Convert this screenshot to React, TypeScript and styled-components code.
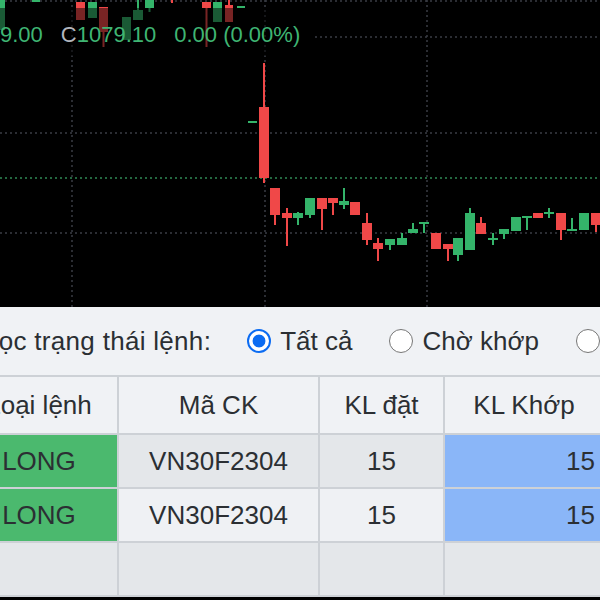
import React from "react";
import styled, { createGlobalStyle } from "styled-components";

const GlobalStyle = createGlobalStyle`
  html, body {
    margin: 0;
    padding: 0;
    background: #000;
  }
  body {
    font-family: "Liberation Sans", Arial, sans-serif;
  }
`;

const UP = "#34b46a";
const DOWN = "#f04848";

type Candle = { x: number; w?: number; t: number; b: number; h?: number; l?: number; up: boolean };

// main series, read off the chart
const candles: Candle[] = [
  { x: 259, t: 107, b: 178, h: 63, l: 183, up: false },
  { x: 270, t: 188, b: 215, l: 225, up: false },
  { x: 282, t: 213, b: 218, h: 208, l: 246, up: false },
  { x: 293, t: 213, b: 218, h: 212, l: 225, up: true },
  { x: 305, t: 198, b: 215, l: 218, up: true },
  { x: 317, t: 198, b: 209, l: 230, up: false },
  { x: 328, t: 198, b: 203, l: 215, up: false },
  { x: 339, t: 201, b: 205, h: 188, l: 209, up: true },
  { x: 350, t: 202, b: 215, up: false },
  { x: 362, t: 223, b: 240, h: 213, l: 245, up: false },
  { x: 373, t: 243, b: 249, h: 238, l: 261, up: false },
  { x: 385, t: 239, b: 245, l: 250, up: true },
  { x: 397, t: 238, b: 245, h: 233, up: true },
  { x: 408, t: 229, b: 233, h: 223, up: true },
  { x: 419, t: 222, b: 224, l: 233, up: true },
  { x: 431, t: 233, b: 249, up: false },
  { x: 443, t: 244, b: 249, l: 261, up: false },
  { x: 453, t: 238, b: 255, l: 261, up: true },
  { x: 465, t: 213, b: 250, h: 208, up: true },
  { x: 476, t: 223, b: 234, h: 217, up: false },
  { x: 488, t: 238, b: 240, h: 233, l: 245, up: true },
  { x: 499, t: 229, b: 234, l: 239, up: true },
  { x: 511, t: 217, b: 231, up: true },
  { x: 522, t: 216, b: 218, l: 230, up: true },
  { x: 533, t: 213, b: 218, up: false },
  { x: 544, t: 212, b: 214, h: 208, l: 218, up: true },
  { x: 556, t: 213, b: 230, l: 240, up: false },
  { x: 567, t: 229, b: 231, h: 218, up: true },
  { x: 579, t: 213, b: 230, up: true },
  { x: 591, t: 213, b: 225, l: 232, up: false },
  // top strip, partly under the legend
  { x: 0, w: 5, t: 0, b: 30, up: true },
  { x: 32, w: 8, t: 0, b: 2, up: true },
  { x: 76, w: 9, t: 2, b: 20, up: false },
  { x: 88, w: 9, t: 2, b: 18, up: true },
  { x: 99, w: 9, t: 7, b: 32, l: 47, up: false },
  { x: 122, w: 9, t: 17, b: 40, up: true },
  { x: 133, w: 10, t: 10, b: 20, h: 0, up: true },
  { x: 145, w: 9, t: 0, b: 8, l: 12, up: true },
  { x: 171, w: 2, t: 0, b: 3, up: false },
  { x: 202, w: 9, t: 2, b: 8, l: 47, up: false },
  { x: 213, w: 9, t: 2, b: 22, up: true },
  { x: 225, w: 8, t: 5, b: 22, h: 0, up: false },
  { x: 237, w: 8, t: 6, b: 8, up: true },
];

const ChartPane = styled.div`
  position: relative;
  height: 307px;
  background: #000;
  overflow: hidden;
`;

const Legend = styled.div`
  position: absolute;
  top: 8px;
  left: 0;
  width: 312px;
  height: 48px;
  box-sizing: border-box;
  padding-top: 6px;
  display: flex;
  align-items: center;
  gap: 18px;
  background: rgba(0, 0, 0, 0.5);
  font-size: 22px;
  color: #3fb573;
  white-space: nowrap;
`;

const Muted = styled.span`
  color: #b2b5be;
`;

const OrderPanel = styled.div`
  margin-left: -39px;
  width: 660px;
  background: #f0f2f5;
  color: #2b2f33;
  font-size: 26px;
`;

const FilterBar = styled.div`
  height: 68px;
  box-sizing: border-box;
  padding-left: 23px;
  display: flex;
  align-items: center;
  white-space: nowrap;
`;

const FilterLabel = styled.span`
  margin-right: 36px;
  letter-spacing: 0.3px;
`;

const RadioOption = styled.label`
  display: flex;
  align-items: center;
  gap: 9px;
  margin-right: 37px;
`;

const RadioDot = styled.span<{ $checked?: boolean }>`
  width: 24px;
  height: 24px;
  box-sizing: border-box;
  border-radius: 50%;
  border: ${(p) => (p.$checked ? "2.5px solid #0c6cf2" : "1.5px solid #767676")};
  background: ${(p) =>
    p.$checked ? "radial-gradient(circle, #0c6cf2 0 6px, #fff 6.8px)" : "#fff"};
`;

const OrdersGrid = styled.div`
  display: grid;
  grid-template-columns: 158px 201px 125px 160px;
  border-top: 2px solid #cdd1d6;
`;

type Tone = "head" | "dark" | "light" | "long" | "match";

const tones: Record<Tone, string> = {
  head: "#f0f2f5",
  dark: "#e4e7ea",
  light: "#eff1f4",
  long: "#4bb96e",
  match: "#8ab6f8",
};

const Cell = styled.div<{ $tone: Tone; $align?: "center" | "right"; $head?: boolean }>`
  height: ${(p) => (p.$head ? "58px" : "54px")};
  box-sizing: border-box;
  border-right: 2px solid #cdd1d6;
  border-bottom: 2px solid #cdd1d6;
  background: ${(p) => tones[p.$tone]};
  display: flex;
  align-items: center;
  justify-content: ${(p) => (p.$align === "right" ? "flex-end" : "center")};
  padding: 0 8px;
  white-space: nowrap;
`;

const rows = [
  { side: "LONG", code: "VN30F2304", qty: 15, matched: 15, tone: "dark" as Tone },
  { side: "LONG", code: "VN30F2304", qty: 15, matched: 15, tone: "light" as Tone },
];

const grid = { stroke: "#3a3d44", strokeWidth: 1.5, strokeDasharray: "2 3" };

const Chart = () => (
  <ChartPane>
    <svg width="600" height="307" style={{ display: "block" }}>
      <line x1="0" y1="1" x2="600" y2="1" {...grid} />
      <line x1="72" y1="0" x2="72" y2="307" {...grid} />
      <line x1="265" y1="0" x2="265" y2="307" {...grid} />
      <line x1="427" y1="0" x2="427" y2="307" {...grid} />
      <line x1="315" y1="37" x2="600" y2="37" {...grid} />
      <line x1="0" y1="133" x2="600" y2="133" {...grid} />
      <line x1="0" y1="233" x2="600" y2="233" {...grid} />
      <line x1="0" y1="178" x2="600" y2="178" stroke="#2f8a55" strokeWidth="1.5" strokeDasharray="2 3" />
      <rect x="248" y="121" width="9" height="2" fill={UP} />
      {candles.map((c, i) => {
        const w = c.w ?? 10;
        const color = c.up ? UP : DOWN;
        const mid = c.x + w / 2;
        return (
          <g key={i}>
            <line x1={mid} x2={mid} y1={c.h ?? c.t} y2={c.l ?? c.b} stroke={color} strokeWidth="2" />
            <rect x={c.x} y={c.t} width={w} height={Math.max(c.b - c.t, 2)} fill={color} />
          </g>
        );
      })}
    </svg>
    <Legend>
      <span>9.00</span>
      <span>
        <Muted>C</Muted>1079.10
      </span>
      <span>0.00 (0.00%)</span>
    </Legend>
  </ChartPane>
);

export default function App() {
  return (
    <>
      <GlobalStyle />
      <div style={{ width: 600, height: 600, overflow: "hidden" }}>
        <Chart />
        <OrderPanel>
          <FilterBar>
            <FilterLabel>Lọc trạng thái lệnh:</FilterLabel>
            <RadioOption>
              <RadioDot $checked />
              Tất cả
            </RadioOption>
            <RadioOption>
              <RadioDot />
              Chờ khớp
            </RadioOption>
            <RadioOption>
              <RadioDot />
              Đã khớp
            </RadioOption>
          </FilterBar>
          <OrdersGrid>
            <Cell $tone="head" $head>Loại lệnh</Cell>
            <Cell $tone="head" $head>Mã CK</Cell>
            <Cell $tone="head" $head>KL đặt</Cell>
            <Cell $tone="head" $head>KL Khớp</Cell>
            {rows.map((r, i) => (
              <React.Fragment key={i}>
                <Cell $tone="long">{r.side}</Cell>
                <Cell $tone={r.tone}>{r.code}</Cell>
                <Cell $tone={r.tone}>{r.qty}</Cell>
                <Cell $tone="match" $align="right">{r.matched}</Cell>
              </React.Fragment>
            ))}
            <Cell $tone="dark" />
            <Cell $tone="dark" />
            <Cell $tone="dark" />
            <Cell $tone="dark" />
          </OrdersGrid>
        </OrderPanel>
      </div>
    </>
  );
}
